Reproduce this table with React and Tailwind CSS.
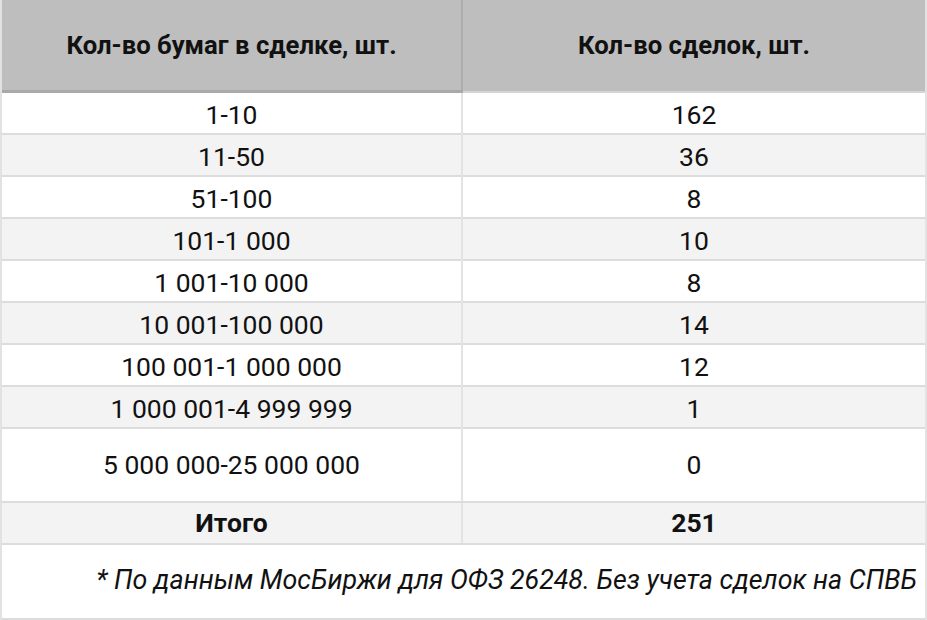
export default function App() {
  const rows = [
    ["1-10", "162"],
    ["11-50", "36"],
    ["51-100", "8"],
    ["101-1 000", "10"],
    ["1 001-10 000", "8"],
    ["10 001-100 000", "14"],
    ["100 001-1 000 000", "12"],
    ["1 000 001-4 999 999", "1"],
  ];
  return (
    <div
      className="w-[927px] h-[620px] bg-white text-[#111] border-l-2 border-r-2 border-[#e2e2e2]"
      style={{ fontFamily: "Roboto, 'Noto Sans', sans-serif" }}
    >
      <div className="grid grid-cols-[461px_1fr] h-[93px] bg-[#bebebe] font-bold text-[25.7px]">
        <div className="flex items-center justify-center border-r-2 border-[#adadad] border-b-[3px] border-b-[#a9a9a9]">
          Кол-во бумаг в сделке, шт.
        </div>
        <div className="flex items-center justify-center border-b-2 border-b-[#d4d4d4]">
          Кол-во сделок, шт.
        </div>
      </div>
      {rows.map((r, i) => (
        <div
          key={i}
          className={
            "grid grid-cols-[461px_1fr] h-[42px] text-[26.5px] border-b-2 border-[#dcdcdc] " +
            (i % 2 === 0 ? "bg-white" : "bg-[#f3f3f3]")
          }
        >
          <div className="flex items-center justify-center border-r-2 border-[#e3e3e3] pt-[2px]">{r[0]}</div>
          <div className="flex items-center justify-center pt-[2px]">{r[1]}</div>
        </div>
      ))}
      <div className="grid grid-cols-[461px_1fr] h-[74px] text-[26.5px] border-b-2 border-[#dcdcdc] bg-white">
        <div className="flex items-center justify-center border-r-2 border-[#e3e3e3]">5 000 000-25 000 000</div>
        <div className="flex items-center justify-center">0</div>
      </div>
      <div className="grid grid-cols-[461px_1fr] h-[42px] text-[26.5px] font-bold border-b-2 border-[#dcdcdc] bg-[#f3f3f3]">
        <div className="flex items-center justify-center border-r-2 border-[#e3e3e3]">Итого</div>
        <div className="flex items-center justify-center">251</div>
      </div>
      <div className="h-[75px] flex items-center justify-end pr-[8px] pb-[3px] italic text-[26.8px] border-b-2 border-[#dcdcdc]">
        * По данным МосБиржи для ОФЗ 26248. Без учета сделок на СПВБ
      </div>
    </div>
  );
}
